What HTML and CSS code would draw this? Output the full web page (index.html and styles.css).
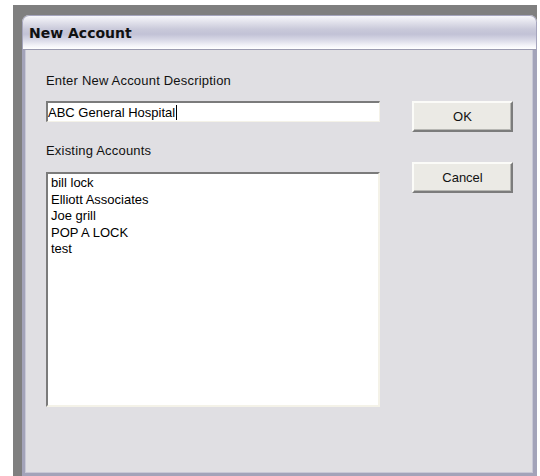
FILE: index.html
```html
<!DOCTYPE html>
<html>
<head>
<meta charset="utf-8">
<link rel="stylesheet" href="styles.css">
<title>New Account</title>
</head>
<body>
<div class="desk">
  <div class="window">
    <div class="titlebar"><span class="title">New Account</span></div>
    <div class="client">
      <div class="form">
        <div class="label first">Enter New Account Description</div>
        <div class="textbox"><span class="value">ABC General Hospital</span><span class="caret"></span></div>
        <div class="label second">Existing Accounts</div>
        <div class="listbox">
          <div class="item">bill lock</div>
          <div class="item">Elliott Associates</div>
          <div class="item">Joe grill</div>
          <div class="item">POP A LOCK</div>
          <div class="item">test</div>
        </div>
      </div>
      <div class="buttons">
        <button class="btn">OK</button>
        <button class="btn">Cancel</button>
      </div>
    </div>
  </div>
</div>
</body>
</html>
```

FILE: styles.css
```css
html, body {
  margin: 0;
  padding: 0;
  background: #ffffff;
}

body {
  width: 540px;
  height: 476px;
  overflow: hidden;
  font-family: "Liberation Sans", Arial, sans-serif;
}

/* grey desktop area behind the dialog */
.desk {
  margin: 5px 0 0 13px;
  width: 524px;
  height: 471px;
  background: #7f7f7f;
  padding: 10px 0 0 9px;
  box-sizing: border-box;
}

.window {
  width: 515px;
  height: 461px;
  display: flex;
  flex-direction: column;
  border-radius: 7px 7px 0 0;
  overflow: hidden;
  background: #e0dfe3;
}

.titlebar {
  height: 35px;
  box-sizing: border-box;
  flex: none;
  border: 1px solid #a5a5bd;
  border-bottom: 1px solid #9b9bb0;
  border-radius: 7px 7px 0 0;
  background: linear-gradient(to bottom,
    #f7f7fb 0%,
    #e2e2ec 18%,
    #c9c9da 40%,
    #c2c2d6 55%,
    #d8d8e6 72%,
    #f4f4f9 90%,
    #ffffff 100%);
  display: flex;
  align-items: center;
  padding-left: 6px;
}

.title {
  font-family: "DejaVu Sans", sans-serif;
  font-weight: bold;
  font-size: 14px;
  color: #111111;
  margin-top: 1px;
}

.client {
  flex: 1;
  display: flex;
  border-left: 3px solid #a3a3b9;
  border-right: 4px solid #a3a3b9;
  border-bottom: 3px solid #a3a3b9;
  box-shadow: inset 1px 0 0 #c8c8d6, inset -1px 0 0 #c8c8d6, inset 0 -1px 0 #c8c8d6;
  padding: 0 0 0 21px;
  gap: 32px;
}

.form {
  width: 334px;
  display: flex;
  flex-direction: column;
}

.label {
  font-size: 13px;
  letter-spacing: 0.2px;
  line-height: 16px;
  color: #111111;
}

.label.first {
  margin-top: 23px;
}

.label.second {
  margin-top: 21px;
}

.textbox {
  margin-top: 12px;
  height: 21px;
  box-sizing: border-box;
  background: #ffffff;
  border-top: 2px solid #7b7b7b;
  border-left: 2px solid #7b7b7b;
  border-right: 1px solid #f4f2e8;
  border-bottom: 1px solid #f4f2e8;
  display: flex;
  align-items: center;
  font-size: 13px;
  color: #000000;
}

.caret {
  display: inline-block;
  width: 1px;
  height: 15px;
  background: #000000;
  margin-left: 1px;
}

.listbox {
  margin-top: 13px;
  height: 235px;
  box-sizing: border-box;
  background: #ffffff;
  border-top: 2px solid #7b7b7b;
  border-left: 2px solid #7b7b7b;
  border-right: 2px solid #f4f2e8;
  border-bottom: 2px solid #f4f2e8;
  padding: 1px 0 0 3px;
  font-size: 13px;
  line-height: 16.5px;
  color: #000000;
}

.buttons {
  display: flex;
  flex-direction: column;
  gap: 30px;
  padding-top: 51px;
}

.btn {
  width: 101px;
  height: 31px;
  margin: 0;
  padding: 0;
  font-family: "Liberation Sans", Arial, sans-serif;
  font-size: 13px;
  color: #111111;
  background: #ebeae5;
  border-top: 2px solid #fbfbf8;
  border-left: 2px solid #fbfbf8;
  border-right: 2px solid #7c7c7c;
  border-bottom: 2px solid #7c7c7c;
  box-shadow: inset -1px -1px 0 #b7b7b3;
  box-sizing: border-box;
}
```
